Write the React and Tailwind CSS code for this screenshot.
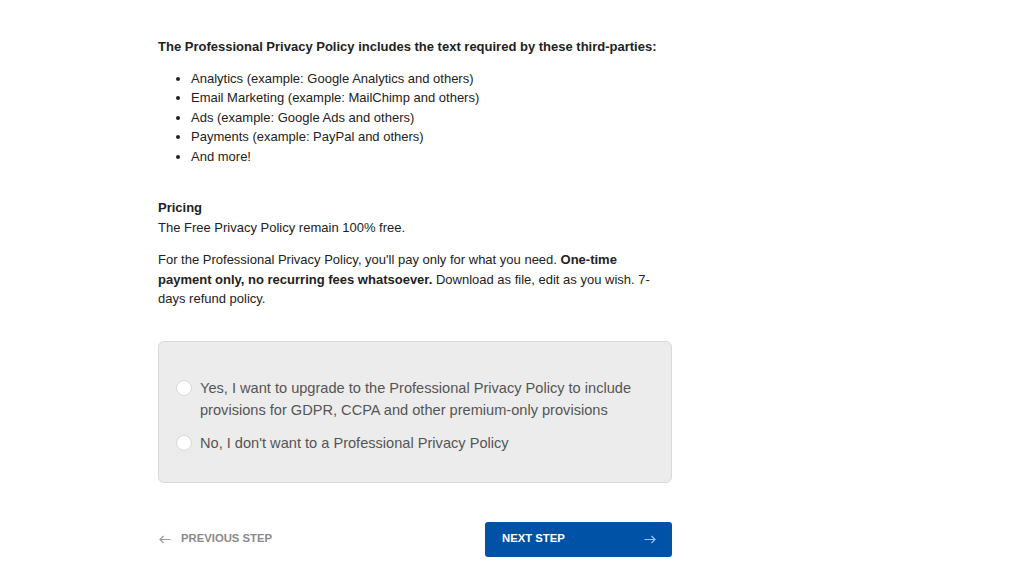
import React, { useState } from 'react';

const items = [
  'Analytics (example: Google Analytics and others)',
  'Email Marketing (example: MailChimp and others)',
  'Ads (example: Google Ads and others)',
  'Payments (example: PayPal and others)',
  'And more!',
];

const options = [
  { id: 'yes', label: 'Yes, I want to upgrade to the Professional Privacy Policy to include provisions for GDPR, CCPA and other premium-only provisions' },
  { id: 'no', label: "No, I don't want to a Professional Privacy Policy" },
];

const Arrow = ({ dir, className }) => (
  <svg width="12" height="9" viewBox="0 0 12 9" fill="none" stroke="currentColor" strokeWidth="1.2" className={className}>
    {dir === 'left' ? (
      <path d="M11.5 4.5H1M4.5 1L1 4.5L4.5 8" />
    ) : (
      <path d="M0.5 4.5H11M7.5 1L11 4.5L7.5 8" />
    )}
  </svg>
);

const App = () => {
  const [choice, setChoice] = useState(null);

  return (
    <div className="min-h-screen bg-white font-['Liberation_Sans',Arial,sans-serif] text-[#222]">
      <div className="ml-[158px] w-[514px] pt-[37px] text-[13px] leading-[19.5px]">
        <p className="font-bold">The Professional Privacy Policy includes the text required by these third-parties:</p>
        <ul className="mt-[12px] list-disc pl-[33px]">
          {items.map(item => <li key={item}>{item}</li>)}
        </ul>

        <p className="mt-[32px] font-bold">Pricing</p>
        <p>The Free Privacy Policy remain 100% free.</p>
        <p className="mt-[13px]">
          For the Professional Privacy Policy, you'll pay only for what you need. <b>One-time payment only, no recurring fees whatsoever.</b> Download as file, edit as you wish. 7-days refund policy.
        </p>

        {/* Upgrade choice */}
        <div className="mt-[32px] h-[142px] rounded-[6px] border border-[#d9d9d9] bg-[#ececec] pl-[17px] pr-[30px] pt-[35px]">
          {options.map(opt => (
            <label key={opt.id} className="mb-[11px] flex cursor-pointer items-start gap-[8px] text-[14.6px] leading-[22px] text-[#555]">
              <span className="mt-[3px] flex h-[16px] w-[16px] shrink-0 items-center justify-center rounded-full border border-[#d6d6d6] bg-white">
                {choice === opt.id && <span className="h-[8px] w-[8px] rounded-full bg-[#0052a6]"></span>}
              </span>
              <input type="radio" name="upgrade" className="hidden" checked={choice === opt.id} onChange={() => setChoice(opt.id)} />
              <span>{opt.label}</span>
            </label>
          ))}
        </div>

        <div className="mt-[39px] flex items-center justify-between">
          <button className="ml-[1px] flex items-center gap-[10px] text-[11.3px] font-bold uppercase text-[#8a8a8a]">
            <Arrow dir="left" className="text-[#999]" />
            Previous Step
          </button>
          <button className="flex h-[35px] w-[187px] items-center justify-between rounded-[3px] bg-[#0052a6] pl-[17px] pr-[16px] text-[11.3px] font-bold uppercase text-white">
            Next Step
            <Arrow dir="right" className="text-[#a9c0e0]" />
          </button>
        </div>
      </div>
    </div>
  );
};

export default App;
